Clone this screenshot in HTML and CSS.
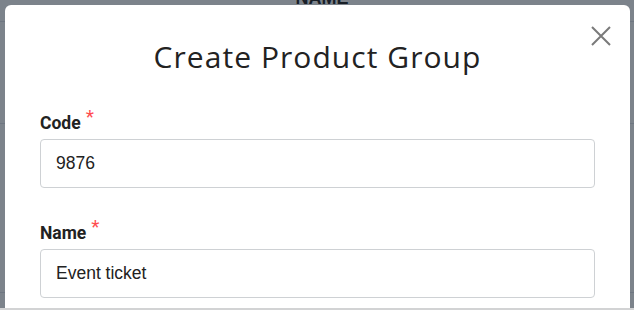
FILE: index.html
```html
<!DOCTYPE html>
<html lang="en">
<head>
<meta charset="utf-8">
<title>Create Product Group</title>
<link rel="stylesheet" href="styles.css">
</head>
<body>
<div class="page">
  <div class="table-head">NAME</div>
  <div class="table-row"></div>
  <div class="table-row"></div>
  <div class="table-row"></div>
</div>
<div class="backdrop"></div>
<div class="modal" role="dialog" aria-labelledby="modal-title">
  <button class="close" type="button" aria-label="Close">
    <svg width="20" height="20" viewBox="0 0 20 20" aria-hidden="true">
      <path d="M1 1 L19 19 M19 1 L1 19" stroke="#7a7a7a" stroke-width="2" fill="none"/>
    </svg>
  </button>
  <h1 class="modal-title" id="modal-title">Create Product Group</h1>
  <form class="form">
    <div class="field">
      <label class="label" for="code">Code<span class="req">*</span></label>
      <input class="input" id="code" type="text" value="9876">
    </div>
    <div class="field">
      <label class="label" for="name">Name<span class="req">*</span></label>
      <input class="input" id="name" type="text" value="Event ticket">
    </div>
  </form>
</div>
<div class="frame-bottom"></div>
</body>
</html>
```
FILE: styles.css
```css
html, body {
  margin: 0;
  padding: 0;
  height: 100%;
  overflow: hidden;
}
body {
  background: #ffffff;
  font-family: "Liberation Sans", Arial, sans-serif;
}
.page {
  display: flex;
  flex-direction: column;
}
.table-head {
  height: 34px;
  margin-top: -12px;
  text-align: center;
  font-family: "Liberation Sans", Arial, sans-serif;
  font-weight: bold;
  font-size: 18px;
  line-height: 20px;
  color: #111;
  border-bottom: 1px solid #dde1e6;
  box-sizing: border-box;
  padding-left: 10px;
}
.table-row {
  height: 101px;
  border-bottom: 1px solid #dde1e6;
}
.table-row:nth-child(3) {
  height: 168px;
}
.backdrop {
  position: fixed;
  inset: 0;
  background: rgba(30, 41, 55, 0.58);
}
.modal {
  position: absolute;
  top: 5px;
  left: 5px;
  width: 625px;
  height: 340px;
  background: #fff;
  border-radius: 6px;
  box-sizing: border-box;
  padding: 34px 35px 0 35px;
}
.close {
  position: absolute;
  top: 21px;
  right: 19px;
  width: 20px;
  height: 20px;
  padding: 0;
  border: 0;
  background: none;
  display: flex;
}
.modal-title {
  margin: 0;
  text-align: center;
  font-family: "Open Sans", "Lato", sans-serif;
  font-weight: 400;
  font-size: 30px;
  line-height: 36px;
  letter-spacing: 1.05px;
  color: #222;
}
.form {
  margin-top: 36px;
  display: flex;
  flex-direction: column;
  gap: 33px;
}
.field {
  display: flex;
  flex-direction: column;
  gap: 4px;
}
.label {
  font-family: Roboto, "Liberation Sans", sans-serif;
  font-weight: 700;
  font-size: 17.5px;
  line-height: 24px;
  color: #222;
}
.req {
  color: #ff4d4f;
  font-weight: 400;
  font-size: 19px;
  margin-left: 5px;
  vertical-align: 6px;
  line-height: 0;
}
.input {
  height: 49px;
  box-sizing: border-box;
  border: 1px solid #ced1d4;
  border-radius: 4px;
  padding: 0 15px;
  font-family: "Liberation Sans", Arial, sans-serif;
  font-size: 17.5px;
  color: #222;
  background: #fff;
  outline: none;
}
.frame-bottom {
  position: fixed;
  left: 0;
  right: 0;
  bottom: 0;
  height: 2px;
  background: #d2d3d4;
}
```
